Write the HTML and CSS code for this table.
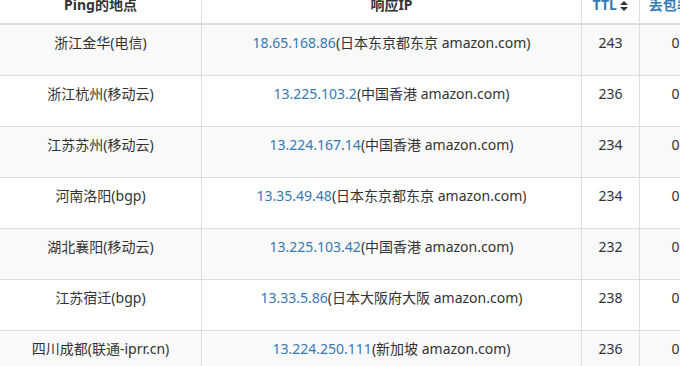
FILE: index.html
```html
<!DOCTYPE html>
<html>
  <head>
    <meta charset="UTF-8" />
    <title>Ping 结果</title>
    <link rel="stylesheet" href="styles.css">
  </head>
  <body>
    <table class="ping-table">
      <colgroup>
        <col class="col-place" />
        <col class="col-ip" />
        <col class="col-ttl" />
        <col class="col-loss" />
      </colgroup>
      <thead>
        <tr>
          <th>Ping的地点</th>
          <th>响应IP</th>
          <th class="sortable">TTL <span class="sort-icon"></span></th>
          <th class="sortable">丢包率 <span class="sort-icon"></span></th>
        </tr>
      </thead>
      <tbody>
        <tr>
          <td>浙江金华(电信)</td>
          <td><a href="#">18.65.168.86</a>(日本东京都东京 amazon.com)</td>
          <td>243</td>
          <td>0</td>
        </tr>
        <tr>
          <td>浙江杭州(移动云)</td>
          <td><a href="#">13.225.103.2</a>(中国香港 amazon.com)</td>
          <td>236</td>
          <td>0</td>
        </tr>
        <tr>
          <td>江苏苏州(移动云)</td>
          <td><a href="#">13.224.167.14</a>(中国香港 amazon.com)</td>
          <td>234</td>
          <td>0</td>
        </tr>
        <tr>
          <td>河南洛阳(bgp)</td>
          <td><a href="#">13.35.49.48</a>(日本东京都东京 amazon.com)</td>
          <td>234</td>
          <td>0</td>
        </tr>
        <tr>
          <td>湖北襄阳(移动云)</td>
          <td><a href="#">13.225.103.42</a>(中国香港 amazon.com)</td>
          <td>232</td>
          <td>0</td>
        </tr>
        <tr>
          <td>江苏宿迁(bgp)</td>
          <td><a href="#">13.33.5.86</a>(日本大阪府大阪 amazon.com)</td>
          <td>238</td>
          <td>0</td>
        </tr>
        <tr>
          <td>四川成都(联通-iprr.cn)</td>
          <td><a href="#">13.224.250.111</a>(新加坡 amazon.com)</td>
          <td>236</td>
          <td>0</td>
        </tr>
      </tbody>
    </table>
  </body>
</html>
```

FILE: styles.css
```css
body {
  margin: 0;
  font-family: "Noto Sans", "Noto Sans CJK SC", sans-serif;
  font-size: 14px;
  line-height: 20px;
  color: #333;
  background: #fff;
  overflow: hidden;
}

/** 结果表 */
.ping-table {
  margin: -14px 0 0 -1px;
  border-collapse: collapse;
  table-layout: fixed;
  width: 712px;
}
.col-place {
  width: 202px;
}
.col-ip {
  width: 380px;
}
.col-ttl {
  width: 58px;
}
.col-loss {
  width: 72px;
}
.ping-table th,
.ping-table td {
  padding: 8px;
  border: 1px solid #ddd;
  text-align: center;
  vertical-align: top;
  white-space: nowrap;
}
.ping-table th {
  border-bottom-width: 2px;
  font-weight: bold;
}
.ping-table tbody tr {
  height: 51px;
}
.ping-table tbody tr:nth-child(odd) {
  background: #f9f9f9;
}
.ping-table a {
  color: #337ab7;
  text-decoration: none;
}
.sortable {
  color: #337ab7;
}
.sort-icon {
  display: inline-block;
  position: relative;
  width: 8px;
  height: 10px;
  vertical-align: -1px;
}
.sort-icon::before,
.sort-icon::after {
  content: "";
  position: absolute;
  left: 0;
  border-left: 4px solid transparent;
  border-right: 4px solid transparent;
}
.sort-icon::before {
  top: 0;
  border-bottom: 4px solid #333;
}
.sort-icon::after {
  bottom: 0;
  border-top: 4px solid #333;
}
```
